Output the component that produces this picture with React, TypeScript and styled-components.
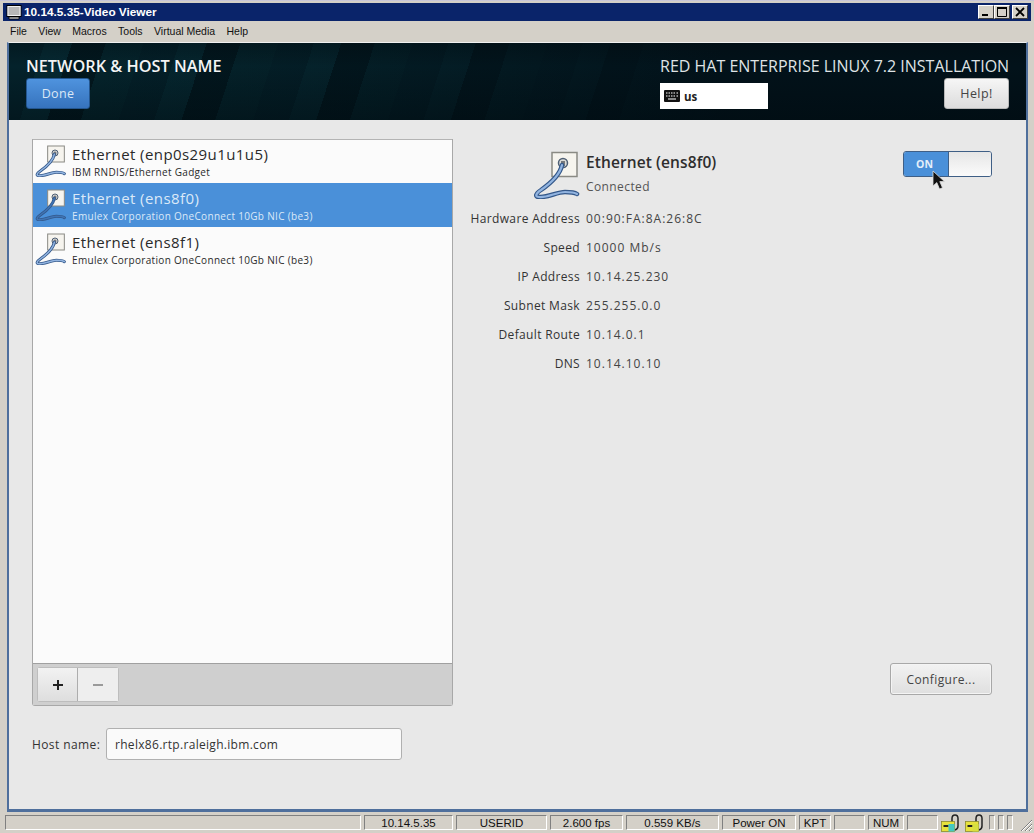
import styled, { createGlobalStyle } from "styled-components";

const GlobalStyle = createGlobalStyle`
  html, body {
    margin: 0;
    padding: 0;
    background: #d4d0c8;
  }
  * {
    box-sizing: border-box;
  }
`;

const UI_FONT = `"Open Sans", "Noto Sans", sans-serif`;

const networkDevices = [
  { name: "Ethernet (enp0s29u1u1u5)", model: "IBM RNDIS/Ethernet Gadget" },
  { name: "Ethernet (ens8f0)", model: "Emulex Corporation OneConnect 10Gb NIC (be3)", selected: true },
  { name: "Ethernet (ens8f1)", model: "Emulex Corporation OneConnect 10Gb NIC (be3)" },
];

const deviceDetails = [
  ["Hardware Address", "00:90:FA:8A:26:8C"],
  ["Speed", "10000 Mb/s"],
  ["IP Address", "10.14.25.230"],
  ["Subnet Mask", "255.255.0.0"],
  ["Default Route", "10.14.0.1"],
  ["DNS", "10.14.10.10"],
];

const statusCells = [
  { width: 356, text: "" },
  { width: 89, text: "10.14.5.35" },
  { width: 91, text: "USERID" },
  { width: 73, text: "2.600 fps" },
  { width: 93, text: "0.559 KB/s" },
  { width: 74, text: "Power ON" },
  { width: 32, text: "KPT" },
  { width: 31, text: "" },
  { width: 36, text: "NUM" },
  { width: 31, text: "" },
];

const CABLE_PATH = "M29 14 C27 24 18 32 8 39 C2 43 2 46 6 46 C14 47 24 41 32 41 C36 41 41 41 44 43";

function EthernetIcon({ size, selected }: { size: number; selected?: boolean }) {
  return (
    <svg width={size} height={size} viewBox="0 0 48 48">
      <rect x="19" y="1.5" width="25" height="24" fill="#f6f4ee" stroke="#8a8a84" strokeWidth="1.5" />
      <circle cx="30" cy="12" r="4.5" fill="#dcdcd8" stroke="#4f5f74" strokeWidth="1.5" />
      <rect x="28" y="10" width="4" height="5" fill="#75787c" />
      <path d={CABLE_PATH} fill="none" stroke="#34588a" strokeWidth="4.5" strokeLinecap="round" />
      <path
        d={CABLE_PATH}
        fill="none"
        stroke={selected ? "#3f74b4" : "#92b4e0"}
        strokeWidth="2.2"
        strokeLinecap="round"
      />
    </svg>
  );
}

function LockIcon({ color }: { color: string }) {
  return (
    <LockGlyph width="19" height="18" viewBox="0 0 19 18">
      <path d="M11 8V4.5C11 2.5 12.3 1 14 1C15.7 1 17 2.5 17 4.5V12C17 14 16 15.5 14 16" fill="none" stroke="#222" strokeWidth="1.5" />
      <rect x="0.5" y="7.5" width="13" height="10" fill="#e6e23c" stroke="#8a8a30" strokeWidth="0.8" />
      <rect x="2.5" y="11" width="5" height="2" fill="#222" />
      <rect x="7.5" y="10" width="6" height="7.5" fill={color} />
    </LockGlyph>
  );
}

function App() {
  return (
    <Viewer>
      <GlobalStyle />
      <TitleBar>
        <TitleLeft>
          <svg width="16" height="15" viewBox="0 0 16 15">
            <rect x="1" y="0.5" width="14" height="11" fill="#c4c4c4" stroke="#000" />
            <rect x="2" y="1.5" width="12" height="9" fill="#b8b8b8" stroke="#f2f2f2" />
            <path d="M3 12H13V14H3Z" fill="#e8e8e8" stroke="#000" strokeWidth="0.8" />
          </svg>
          <TitleText>10.14.5.35-Video Viewer</TitleText>
        </TitleLeft>
        <WindowButtons>
          <WindowButton>
            <svg width="10" height="10" viewBox="0 0 10 10">
              <rect x="1" y="7" width="6" height="2" fill="#000" />
            </svg>
          </WindowButton>
          <WindowButton>
            <svg width="10" height="10" viewBox="0 0 10 10">
              <path d="M0.5 1.5H9.5V9.5H0.5Z" fill="none" stroke="#000" strokeWidth="1" />
              <rect x="0" y="0" width="10" height="2" fill="#000" />
            </svg>
          </WindowButton>
          <CloseButton>
            <svg width="10" height="10" viewBox="0 0 10 10">
              <path d="M1 1L9 9M9 1L1 9" stroke="#000" strokeWidth="1.8" />
            </svg>
          </CloseButton>
        </WindowButtons>
      </TitleBar>
      <MenuBar>
        {["File", "View", "Macros", "Tools", "Virtual Media", "Help"].map((item) => (
          <MenuItem key={item}>{item}</MenuItem>
        ))}
      </MenuBar>
      <Frame>
        <Header>
          <HeaderLeft>
            <PageTitle>NETWORK &amp; HOST NAME</PageTitle>
            <DoneButton>Done</DoneButton>
          </HeaderLeft>
          <HeaderRight>
            <ProductTitle>RED HAT ENTERPRISE LINUX 7.2 INSTALLATION</ProductTitle>
            <HeaderControls>
              <KeyboardBox>
                <svg width="16" height="12" viewBox="0 0 16 12">
                  <rect width="16" height="12" rx="1" fill="#111" />
                  <path
                    d="M2 3h1.5M4.5 3H6M7 3h1.5M9.5 3H11M12.5 3H14M2 6h1.5M4.5 6H6M7 6h1.5M9.5 6H11M12.5 6H14M4 9h8"
                    stroke="#fff"
                    strokeWidth="1.2"
                  />
                </svg>
                <span>us</span>
              </KeyboardBox>
              <HelpButton>Help!</HelpButton>
            </HeaderControls>
          </HeaderRight>
        </Header>
        <Body>
          <LeftColumn>
            <DevicePanel>
              <DeviceList>
                {networkDevices.map((device) => (
                  <DeviceRow key={device.name} $selected={device.selected}>
                    <EthernetIcon size={32} selected={device.selected} />
                    <DeviceText>
                      <DeviceName $selected={device.selected}>{device.name}</DeviceName>
                      <DeviceModel $selected={device.selected}>{device.model}</DeviceModel>
                    </DeviceText>
                  </DeviceRow>
                ))}
              </DeviceList>
              <DeviceToolbar>
                <ToolGroup>
                  <AddButton>
                    <svg width="12" height="12" viewBox="0 0 12 12">
                      <path d="M6 1V11M1 6H11" stroke="#222" strokeWidth="2" />
                    </svg>
                  </AddButton>
                  <RemoveButton>
                    <svg width="12" height="12" viewBox="0 0 12 12">
                      <path d="M1 6H11" stroke="#9a9a9a" strokeWidth="2" />
                    </svg>
                  </RemoveButton>
                </ToolGroup>
              </DeviceToolbar>
            </DevicePanel>
            <HostRow>
              <HostLabel>Host name:</HostLabel>
              <HostInput>rhelx86.rtp.raleigh.ibm.com</HostInput>
            </HostRow>
          </LeftColumn>
          <RightColumn>
            <SwitchSlot>
              <PowerSwitch>
                <SwitchOn>ON</SwitchOn>
                <SwitchOff />
              </PowerSwitch>
              <Cursor width="14" height="20" viewBox="0 0 14 20">
                <path d="M1 1V16L4.8 12.6L7.5 19L10.5 17.8L7.8 11.6H12.5Z" fill="#111" stroke="#ddd" strokeWidth="0.8" />
              </Cursor>
            </SwitchSlot>
            <DetailHead>
              <EthernetIcon size={48} />
              <DetailHeadText>
                <DetailName>Ethernet (ens8f0)</DetailName>
                <DetailState>Connected</DetailState>
              </DetailHeadText>
            </DetailHead>
            <DetailGrid>
              {deviceDetails.map(([label, value]) => (
                <DetailRow key={label}>
                  <DetailLabel>{label}</DetailLabel>
                  <DetailValue>{value}</DetailValue>
                </DetailRow>
              ))}
            </DetailGrid>
            <ConfigureRow>
              <ConfigureButton>Configure...</ConfigureButton>
            </ConfigureRow>
          </RightColumn>
        </Body>
      </Frame>
      <StatusBar>
        {statusCells.map((cell, index) => (
          <StatusCell key={index} style={{ width: cell.width }}>
            {cell.text}
          </StatusCell>
        ))}
        <LockSlot>
          <LockIcon color="#44c8c0" />
        </LockSlot>
        <LockSlot>
          <LockIcon color="#d8e040" />
        </LockSlot>
        <TinyCell />
        <TinyCell />
        <TinyCell />
        <Grip width="14" height="14" viewBox="0 0 14 14">
          <path d="M13 2L2 13M13 6L6 13M13 10L10 13" stroke="#808080" strokeWidth="1" />
          <path d="M13 3L3 13M13 7L7 13M13 11L11 13" stroke="#fff" strokeWidth="1" />
        </Grip>
      </StatusBar>
    </Viewer>
  );
}

const Viewer = styled.div`
  position: relative;
  display: flex;
  flex-direction: column;
  width: 1034px;
  height: 833px;
  padding: 2px 0 3px;
  overflow: hidden;
  background: #d4d0c8;
  border-top: 1px solid #c8c6d8;
`;

const TitleBar = styled.div`
  display: flex;
  justify-content: space-between;
  align-items: center;
  height: 18px;
  margin: 0 3px;
  padding: 0 3px;
  background: #0a246a;
  flex-shrink: 0;
`;

const TitleLeft = styled.div`
  display: flex;
  align-items: center;
  gap: 2px;
`;

const TitleText = styled.div`
  font: bold 11.8px "Liberation Sans", Arial, sans-serif;
  color: #fff;
`;

const WindowButtons = styled.div`
  display: flex;
`;

const WindowButton = styled.div`
  display: flex;
  align-items: center;
  justify-content: center;
  width: 16px;
  height: 14px;
  background: #d4d0c8;
  border: 1px solid;
  border-color: #fff #404040 #404040 #fff;
`;

const CloseButton = styled(WindowButton)`
  margin-left: 2px;
`;

const MenuBar = styled.div`
  display: flex;
  align-items: center;
  gap: 11.4px;
  height: 21px;
  padding: 0 0 2px 10px;
  flex-shrink: 0;
`;

const MenuItem = styled.div`
  font: 10.5px "Liberation Sans", Arial, sans-serif;
  color: #111;
`;

const Frame = styled.div`
  display: flex;
  flex-direction: column;
  flex: 1;
  margin: 0 6px 0 7px;
  border: 2px solid #4f6f9c;
  border-top: 1px solid #f0f0f0;
  border-bottom-width: 3px;
  background: #e8e8e8;
  font-family: ${UI_FONT};
`;

const Header = styled.div`
  display: flex;
  justify-content: space-between;
  height: 77px;
  padding: 13px 17px 0 17px;
  flex-shrink: 0;
  background:
    linear-gradient(180deg, rgba(0, 8, 12, 0.3) 0%, rgba(0, 8, 12, 0) 30%, rgba(0, 8, 12, 0.4) 100%),
    linear-gradient(90deg, rgba(2, 16, 24, 0) 0%, rgba(2, 16, 24, 0.3) 30%, #02121a 70%),
    repeating-linear-gradient(108deg, #04222b 0 34px, #062a33 34px 60px, #02181f 60px 92px, #05262e 92px 128px);
`;

const HeaderLeft = styled.div`
  display: flex;
  flex-direction: column;
  align-items: flex-start;
`;

const PageTitle = styled.div`
  font-size: 16.3px;
  font-weight: 600;
  line-height: 20px;
  color: #f4f4f4;
  white-space: nowrap;
`;

const DoneButton = styled.div`
  display: flex;
  align-items: center;
  justify-content: center;
  width: 64px;
  height: 31px;
  margin-top: 2px;
  border-radius: 3px;
  border: 1px solid #24568f;
  background: linear-gradient(#4f93de, #3673bd);
  color: #dbe8f6;
  font-size: 12.5px;
  letter-spacing: 0.3px;
`;

const HeaderRight = styled.div`
  display: flex;
  flex-direction: column;
  align-items: flex-start;
  width: 349px;
`;

const ProductTitle = styled.div`
  font-size: 16px;
  line-height: 20px;
  color: #dfe3e5;
  white-space: nowrap;
`;

const HeaderControls = styled.div`
  display: flex;
  justify-content: space-between;
  align-items: flex-start;
  width: 100%;
  margin-top: 2px;
`;

const KeyboardBox = styled.div`
  display: flex;
  align-items: center;
  gap: 4px;
  width: 108px;
  height: 26px;
  margin-top: 5px;
  padding-left: 4px;
  background: #fff;
  color: #222;
  font-size: 11.5px;
  font-weight: 700;
`;

const HelpButton = styled.div`
  display: flex;
  align-items: center;
  justify-content: center;
  width: 65px;
  height: 31px;
  border-radius: 3px;
  border: 1px solid #b8b8b8;
  background: linear-gradient(#f6f6f6, #dcdcdc);
  color: #444;
  font-size: 12.5px;
  letter-spacing: 0.4px;
`;

const Body = styled.div`
  display: flex;
  flex: 1;
  padding: 19px 34px 0 23px;
`;

const LeftColumn = styled.div`
  display: flex;
  flex-direction: column;
  width: 421px;
  flex-shrink: 0;
`;

const DevicePanel = styled.div`
  display: flex;
  flex-direction: column;
  height: 567px;
  border: 1px solid #a8a8a8;
  border-top: 0;
  border-radius: 0 0 3px 3px;
`;

const DeviceList = styled.div`
  flex: 1;
  background: #fbfbfb;
  border-bottom: 1px solid #a0a0a0;
  box-shadow: inset 0 1px 0 #b4b4b4;
`;

const DeviceRow = styled.div<{ $selected?: boolean }>`
  display: flex;
  align-items: center;
  gap: 5px;
  height: 44px;
  padding-left: 2px;
  background: ${({ $selected }) => ($selected ? "#4a90d9" : "transparent")};
`;

const DeviceText = styled.div`
  display: flex;
  flex-direction: column;
  gap: 1px;
`;

const DeviceName = styled.div<{ $selected?: boolean }>`
  font-size: 15px;
  line-height: 20px;
  letter-spacing: 0.42px;
  color: ${({ $selected }) => ($selected ? "#dbe9f8" : "#2a2a2a")};
  white-space: nowrap;
`;

const DeviceModel = styled.div<{ $selected?: boolean }>`
  font-size: 10px;
  line-height: 14px;
  letter-spacing: 0.32px;
  color: ${({ $selected }) => ($selected ? "#dbe9f8" : "#2a2a2a")};
  white-space: nowrap;
`;

const DeviceToolbar = styled.div`
  display: flex;
  height: 41px;
  padding: 3px 4px;
  background: #cfcfcf;
`;

const ToolGroup = styled.div`
  display: flex;
  height: 35px;
  border: 1px solid #bdbdbd;
  border-radius: 3px;
`;

const AddButton = styled.div`
  display: flex;
  align-items: center;
  justify-content: center;
  width: 40px;
  background: linear-gradient(#f2f2f2, #dedede);
  border-right: 1px solid #adadad;
`;

const RemoveButton = styled(AddButton)`
  background: #eeeeee;
  border-right: 0;
`;

const HostRow = styled.div`
  display: flex;
  align-items: center;
  gap: 6px;
  margin-top: 22px;
`;

const HostLabel = styled.div`
  width: 68px;
  font-size: 12px;
  letter-spacing: 0.4px;
  color: #333;
  white-space: nowrap;
`;

const HostInput = styled.div`
  display: flex;
  align-items: center;
  width: 296px;
  height: 32px;
  padding-left: 8px;
  background: #fafafa;
  border: 1px solid #b0b0b0;
  border-radius: 3px;
  font-size: 12px;
  letter-spacing: 0.3px;
  color: #333;
`;

const RightColumn = styled.div`
  position: relative;
  display: flex;
  flex-direction: column;
  flex: 1;
`;

const SwitchSlot = styled.div`
  position: absolute;
  top: 12px;
  right: 0;
`;

const PowerSwitch = styled.div`
  display: flex;
  width: 89px;
  height: 26px;
  border: 1px solid #3f5f86;
  border-radius: 3px;
  overflow: hidden;
`;

const SwitchOn = styled.div`
  display: flex;
  align-items: center;
  justify-content: center;
  width: 45px;
  padding-right: 3px;
  background: #4a90d9;
  border-right: 1px solid #3f5f86;
  color: #e4effa;
  font-size: 10.5px;
  font-weight: 700;
`;

const SwitchOff = styled.div`
  flex: 1;
  background: linear-gradient(#e6e6e6, #fbfbfb);
`;

const Cursor = styled.svg`
  position: absolute;
  top: 19px;
  left: 29px;
`;

const DetailHead = styled.div`
  display: flex;
  align-items: flex-start;
  gap: 5px;
  height: 50px;
  margin: 12px 0 0 80px;
`;

const DetailHeadText = styled.div`
  display: flex;
  flex-direction: column;
  gap: 7px;
  margin-top: 2px;
`;

const DetailName = styled.div`
  font-size: 15.5px;
  font-weight: 600;
  line-height: 19px;
  letter-spacing: 0.1px;
  color: #2e2e2e;
  white-space: nowrap;
`;

const DetailState = styled.div`
  font-size: 12px;
  line-height: 16px;
  letter-spacing: 0.4px;
  color: #555;
`;

const DetailGrid = styled.div`
  display: flex;
  flex-direction: column;
  gap: 9px;
  margin-top: 7px;
`;

const DetailRow = styled.div`
  display: flex;
  gap: 6px;
  height: 20px;
  align-items: center;
`;

const DetailLabel = styled.div`
  width: 127px;
  text-align: right;
  font-size: 12px;
  letter-spacing: 0.35px;
  color: #333;
  white-space: nowrap;
`;

const DetailValue = styled.div`
  font-size: 12px;
  letter-spacing: 1px;
  color: #444;
`;

const ConfigureRow = styled.div`
  display: flex;
  justify-content: flex-end;
  margin-top: auto;
  margin-bottom: 114px;
`;

const ConfigureButton = styled.div`
  display: flex;
  align-items: center;
  justify-content: center;
  width: 102px;
  height: 32px;
  border: 1px solid #a8a8a8;
  border-radius: 3px;
  background: linear-gradient(#f2f2f2, #dfdfdf);
  box-shadow: inset 0 0 0 1px #f4f4f4;
  color: #444;
  font-size: 12px;
  letter-spacing: 0.4px;
`;

const StatusBar = styled.div`
  position: relative;
  display: flex;
  gap: 3px;
  height: 15px;
  margin-top: 3px;
  padding-left: 5px;
  flex-shrink: 0;
`;

const StatusCell = styled.div`
  display: flex;
  align-items: center;
  justify-content: center;
  height: 100%;
  border: 1px solid;
  border-color: #808080 #fff #fff #808080;
  font: 11.5px "Liberation Sans", Arial, sans-serif;
  color: #111;
  white-space: nowrap;
`;

const LockSlot = styled.div`
  width: 21px;
  height: 100%;
`;

const LockGlyph = styled.svg`
  display: block;
  margin-top: -1px;
`;

const TinyCell = styled(StatusCell)`
  width: 6px;
`;

const Grip = styled.svg`
  position: absolute;
  right: 1px;
  bottom: -2px;
`;

export default App;
